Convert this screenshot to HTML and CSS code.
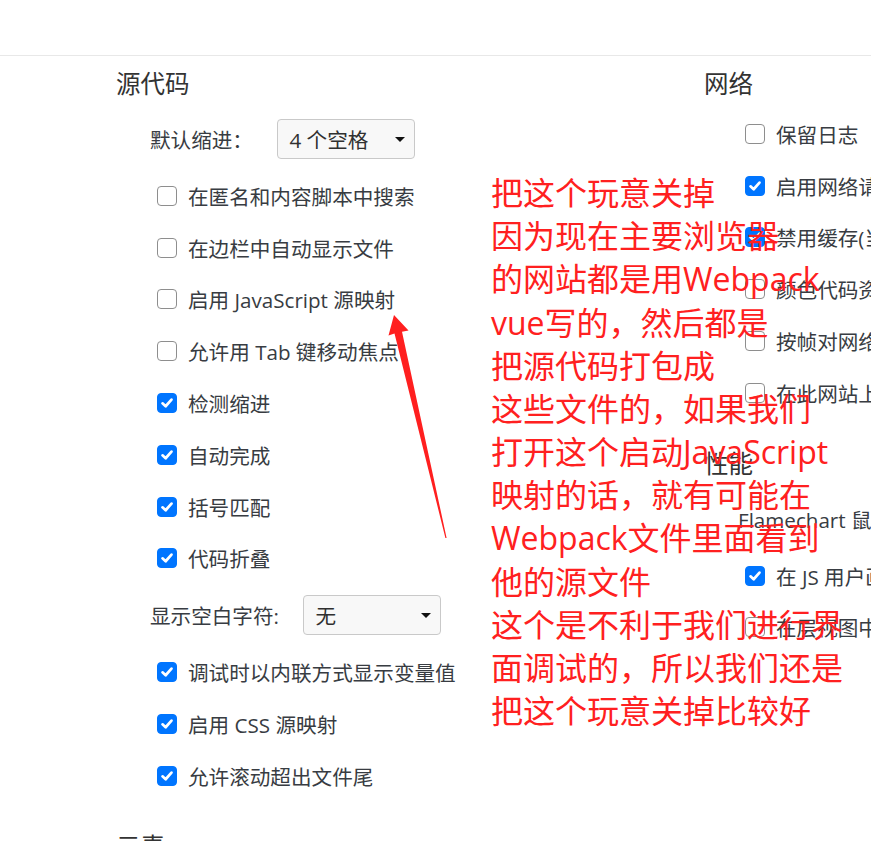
FILE: index.html
```html
<!DOCTYPE html>
<html lang="zh-CN">
<head>
<meta charset="utf-8">
<title>设置</title>
<link rel="stylesheet" href="styles.css">
</head>
<body>
<div class="page">
  <div class="topbar"></div>
  <div class="columns">
    <div class="column">
      <section class="section">
        <h2 class="section-title">源代码</h2>
        <div class="select-row">
          <span class="select-label">默认缩进：</span>
          <div class="select"><span>4 个空格</span><span class="caret"></span></div>
        </div>
        <div class="check-row"><span class="box"></span><span class="check-text">在匿名和内容脚本中搜索</span></div>
        <div class="check-row"><span class="box"></span><span class="check-text">在边栏中自动显示文件</span></div>
        <div class="check-row"><span class="box"></span><span class="check-text">启用 JavaScript 源映射</span></div>
        <div class="check-row"><span class="box"></span><span class="check-text">允许用 Tab 键移动焦点</span></div>
        <div class="check-row"><span class="box checked"><svg viewBox="0 0 20 20"><path d="M5 10.4 L8.5 13.6 L15 6.2"/></svg></span><span class="check-text">检测缩进</span></div>
        <div class="check-row"><span class="box checked"><svg viewBox="0 0 20 20"><path d="M5 10.4 L8.5 13.6 L15 6.2"/></svg></span><span class="check-text">自动完成</span></div>
        <div class="check-row"><span class="box checked"><svg viewBox="0 0 20 20"><path d="M5 10.4 L8.5 13.6 L15 6.2"/></svg></span><span class="check-text">括号匹配</span></div>
        <div class="check-row"><span class="box checked"><svg viewBox="0 0 20 20"><path d="M5 10.4 L8.5 13.6 L15 6.2"/></svg></span><span class="check-text">代码折叠</span></div>
        <div class="select-row">
          <span class="select-label">显示空白字符:</span>
          <div class="select"><span>无</span><span class="caret"></span></div>
        </div>
        <div class="check-row"><span class="box checked"><svg viewBox="0 0 20 20"><path d="M5 10.4 L8.5 13.6 L15 6.2"/></svg></span><span class="check-text">调试时以内联方式显示变量值</span></div>
        <div class="check-row"><span class="box checked"><svg viewBox="0 0 20 20"><path d="M5 10.4 L8.5 13.6 L15 6.2"/></svg></span><span class="check-text">启用 CSS 源映射</span></div>
        <div class="check-row"><span class="box checked"><svg viewBox="0 0 20 20"><path d="M5 10.4 L8.5 13.6 L15 6.2"/></svg></span><span class="check-text">允许滚动超出文件尾</span></div>
      </section>
      <section class="section">
        <h2 class="section-title">元素</h2>
      </section>
    </div>
    <div class="column">
      <section class="section">
        <h2 class="section-title">网络</h2>
        <div class="check-row"><span class="box"></span><span class="check-text">保留日志</span></div>
        <div class="check-row"><span class="box checked"><svg viewBox="0 0 20 20"><path d="M5 10.4 L8.5 13.6 L15 6.2"/></svg></span><span class="check-text">启用网络请求屏蔽</span></div>
        <div class="check-row"><span class="box checked"><svg viewBox="0 0 20 20"><path d="M5 10.4 L8.5 13.6 L15 6.2"/></svg></span><span class="check-text">禁用缓存(当开发者工具处于打开状态时)</span></div>
        <div class="check-row"><span class="box"></span><span class="check-text">颜色代码资源类型</span></div>
        <div class="check-row"><span class="box"></span><span class="check-text">按帧对网络日志进行分组</span></div>
        <div class="check-row"><span class="box"></span><span class="check-text">在此网站上强制屏蔽广告</span></div>
      </section>
      <section class="section">
        <h2 class="section-title">性能</h2>
        <div class="select-row">
          <span class="select-label">Flamechart 鼠标滚轮操作:</span>
        </div>
        <div class="check-row"><span class="box checked"><svg viewBox="0 0 20 20"><path d="M5 10.4 L8.5 13.6 L15 6.2"/></svg></span><span class="check-text">在 JS 用户画像中显示原生函数</span></div>
        <div class="check-row"><span class="box"></span><span class="check-text">在层视图中隐藏 Chrome 框架</span></div>
      </section>
    </div>
  </div>

  <svg class="arrow" width="871" height="841" viewBox="0 0 871 841">
    <polygon points="394,315 408.5,330.5 402,331.8 446.6,538 445.4,538 394.5,333.6 388.5,335.5"/>
  </svg>

  <div class="note">
    <div>把这个玩意关掉</div>
    <div>因为现在主要浏览器</div>
    <div>的网站都是用Webpack</div>
    <div>vue写的，然后都是</div>
    <div>把源代码打包成</div>
    <div>这些文件的，如果我们</div>
    <div>打开这个启动JavaScript</div>
    <div>映射的话，就有可能在</div>
    <div>Webpack文件里面看到</div>
    <div>他的源文件</div>
    <div>这个是不利于我们进行界</div>
    <div>面调试的，所以我们还是</div>
    <div>把这个玩意关掉比较好</div>
  </div>
</div>
</body>
</html>
```

FILE: styles.css
```css
html, body {
  margin: 0;
  padding: 0;
  background: #ffffff;
}

body {
  width: 871px;
  height: 841px;
  overflow: hidden;
  font-family: "Open Sans", "Noto Sans CJK SC", sans-serif;
  color: #383c42;
}

.page {
  position: relative;
  width: 871px;
  height: 841px;
  overflow: hidden;
}

.topbar {
  height: 55px;
  border-bottom: 1px solid #e8e8e8;
}

.columns {
  display: grid;
  grid-template-columns: 588px 1fr;
  padding-left: 116px;
  white-space: nowrap;
}

.column {
  min-width: 0;
}

.section + .section {
  margin-top: 17px;
}

.section-title {
  margin: 0 0 10px 0;
  padding-top: 14px;
  font-size: 24.5px;
  font-weight: 400;
  line-height: 28px;
  color: #333333;
}

.select-row {
  display: flex;
  align-items: center;
  height: 62px;
  padding-left: 34px;
  font-size: 20.6px;
}

.select-label {
  margin-right: 24.5px;
}

.select {
  box-sizing: border-box;
  width: 138px;
  height: 40px;
  display: flex;
  align-items: center;
  justify-content: space-between;
  padding: 0 9px 0 11px;
  border: 1px solid #c9c9c9;
  border-radius: 4px;
  background: #f8f8f8;
  color: #303030;
}

.caret {
  width: 0;
  height: 0;
  border-left: 5px solid transparent;
  border-right: 5px solid transparent;
  border-top: 5px solid #111111;
}

.check-row {
  display: flex;
  align-items: center;
  height: 51.8px;
  padding-left: 41px;
  font-size: 20.6px;
}

.box {
  box-sizing: border-box;
  flex: none;
  width: 20px;
  height: 20px;
  margin-right: 11px;
  border: 1px solid #8e8e8e;
  border-radius: 4px;
  background: #ffffff;
}

.box.checked {
  border-color: #0075ff;
  background: #0075ff;
  display: flex;
}

.box svg {
  width: 18px;
  height: 18px;
}

.box svg path {
  fill: none;
  stroke: #ffffff;
  stroke-width: 3;
  stroke-linecap: round;
  stroke-linejoin: round;
}

.arrow {
  position: absolute;
  left: 0;
  top: 0;
  pointer-events: none;
}

.arrow polygon {
  fill: #ff1f1f;
}

.note {
  position: absolute;
  left: 491px;
  top: 171px;
  font-family: "Open Sans", "Noto Sans CJK SC", sans-serif;
  font-size: 32px;
  line-height: 43.17px;
  color: #ff2020;
  white-space: nowrap;
}
```
